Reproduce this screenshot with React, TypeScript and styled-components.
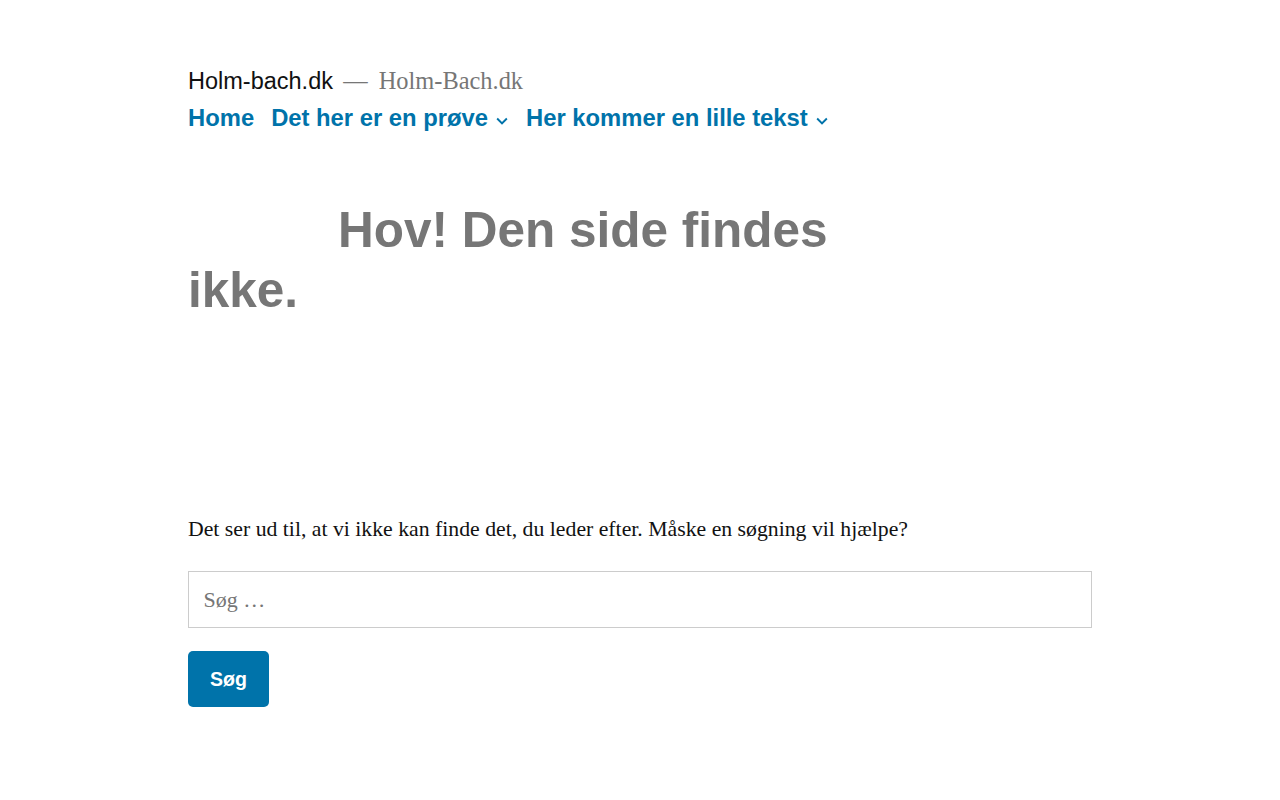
import styled, { createGlobalStyle } from "styled-components";

const SANS = `"Liberation Sans", Arial, sans-serif`;
const SERIF = `"Liberation Serif", "Times New Roman", serif`;
const BLUE = "#0073aa";
const GREY = "#767676";

const GlobalStyle = createGlobalStyle`
  html, body {
    margin: 0;
    padding: 0;
    background: #fff;
  }
  body {
    font-family: ${SERIF};
    font-size: 22px;
    color: #111;
    -webkit-font-smoothing: antialiased;
  }
  * {
    box-sizing: border-box;
  }
`;

const Page = styled.div`
  padding: 66px 188px 80px;
`;

const Branding = styled.div`
  line-height: 30px;
  white-space: nowrap;
`;

const SiteTitle = styled.a`
  font-family: ${SANS};
  font-size: 23.5px;
  color: #111;
  text-decoration: none;
`;

const SiteDescription = styled.span`
  font-family: ${SERIF};
  font-size: 24.4px;
  color: ${GREY};

  &:before {
    content: "\\2014\\00a0";
    margin: 0 0.2em;
  }
`;

const Nav = styled.nav`
  margin-top: 6px;
`;

const Menu = styled.ul`
  display: flex;
  align-items: center;
  list-style: none;
  margin: 0;
  padding: 0;
  gap: 17px;
`;

const MenuItem = styled.li`
  display: flex;
  align-items: center;
`;

const MenuLink = styled.a`
  font-family: ${SANS};
  font-size: 23.8px;
  font-weight: 700;
  line-height: 30px;
  color: ${BLUE};
  text-decoration: none;
`;

const Toggle = styled.span`
  display: inline-flex;
  margin: 6px -4px 0 3px;
  color: ${BLUE};
  svg {
    width: 22px;
    height: 22px;
    fill: currentColor;
  }
`;

const Title = styled.h1`
  font-family: ${SANS};
  font-size: 49.5px;
  font-weight: 700;
  line-height: 60px;
  color: ${GREY};
  margin: 67px 0 0;
  text-indent: 150px;
  max-width: 680px;
`;

const Text = styled.p`
  font-family: ${SERIF};
  font-size: 21.75px;
  line-height: 39.6px;
  margin: 190px 0 0;
`;

const SearchForm = styled.form`
  margin-top: 21px;
`;

const SearchField = styled.input`
  display: block;
  width: 100%;
  font-family: ${SERIF};
  font-size: 22px;
  line-height: 1.8;
  padding: 7.92px 14.52px;
  border: 1px solid #ccc;
  border-radius: 0;
  color: #111;
  background: #fff;
  outline: none;

  &::placeholder {
    color: ${GREY};
    opacity: 1;
  }
`;

const SearchButton = styled.button`
  margin-top: 23px;
  display: inline-block;
  font-family: ${SANS};
  font-size: 19.56px;
  font-weight: 700;
  line-height: 1.2;
  padding: 16.5px 22px;
  border: 0;
  border-radius: 5px;
  background: ${BLUE};
  color: #fff;
  cursor: pointer;
`;

const ChevronDown = () => (
  <svg viewBox="0 0 24 24" aria-hidden="true">
    <path d="M7.41 8.59L12 13.17l4.59-4.58L18 10l-6 6-6-6 1.41-1.41z" />
  </svg>
);

const menu = [
  { label: "Home", sub: false },
  { label: "Det her er en prøve", sub: true },
  { label: "Her kommer en lille tekst", sub: true },
];

const App = () => {
  return (
    <>
      <GlobalStyle />
      <Page>
        <header>
          <Branding>
            <SiteTitle href="#">Holm-bach.dk</SiteTitle>{" "}
            <SiteDescription>Holm-Bach.dk</SiteDescription>
          </Branding>
          <Nav>
            <Menu>
              {menu.map((item) => (
                <MenuItem key={item.label}>
                  <MenuLink href="#">{item.label}</MenuLink>
                  {item.sub && (
                    <Toggle>
                      <ChevronDown />
                    </Toggle>
                  )}
                </MenuItem>
              ))}
            </Menu>
          </Nav>
        </header>
        <main>
          <Title>Hov! Den side findes ikke.</Title>
          <Text>
            Det ser ud til, at vi ikke kan finde det, du leder efter. Måske en søgning vil hjælpe?
          </Text>
          <SearchForm onSubmit={(e) => e.preventDefault()}>
            <SearchField type="search" placeholder="Søg …" />
            <SearchButton type="submit">Søg</SearchButton>
          </SearchForm>
        </main>
      </Page>
    </>
  );
};

export default App;
